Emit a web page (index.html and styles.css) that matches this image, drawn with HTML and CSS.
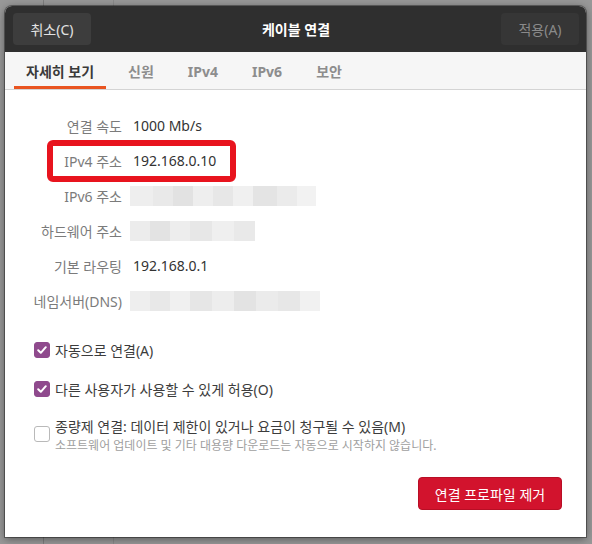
FILE: index.html
```html
<!DOCTYPE html>
<html lang="ko">
<head>
    <meta charset="UTF-8">
    <meta name="viewport" content="width=device-width, initial-scale=1.0">
    <title>케이블 연결</title>
    <link rel="stylesheet" href="styles.css">
</head>
<body>
    <div class="dialog">
        <div class="titlebar">
            <button class="title-button">취소(C)</button>
            <div class="title">케이블 연결</div>
            <button class="title-button apply" disabled>적용(A)</button>
        </div>

        <div class="tabs">
            <div class="tab active">자세히 보기</div>
            <div class="tab">신원</div>
            <div class="tab">IPv4</div>
            <div class="tab">IPv6</div>
            <div class="tab">보안</div>
        </div>

        <div class="content">
            <div class="details">
                <div class="row">
                    <span class="label">연결 속도</span>
                    <span class="value">1000 Mb/s</span>
                </div>
                <div class="row marked">
                    <span class="mark"></span>
                    <span class="label">IPv4 주소</span>
                    <span class="value">192.168.0.10</span>
                </div>
                <div class="row">
                    <span class="label">IPv6 주소</span>
                    <span class="blur blur-v6"></span>
                </div>
                <div class="row">
                    <span class="label">하드웨어 주소</span>
                    <span class="blur blur-hw"></span>
                </div>
                <div class="row">
                    <span class="label">기본 라우팅</span>
                    <span class="value">192.168.0.1</span>
                </div>
                <div class="row">
                    <span class="label">네임서버(DNS)</span>
                    <span class="blur blur-dns"></span>
                </div>
            </div>

            <div class="options">
                <label class="check">
                    <span class="box checked">
                        <svg width="12" height="12" viewBox="0 0 12 12"><path d="M2.2 6.3 L4.8 8.8 L9.8 3.2" fill="none" stroke="#fff" stroke-width="2" stroke-linecap="round" stroke-linejoin="round"/></svg>
                    </span>
                    <span>자동으로 연결(A)</span>
                </label>
                <label class="check">
                    <span class="box checked">
                        <svg width="12" height="12" viewBox="0 0 12 12"><path d="M2.2 6.3 L4.8 8.8 L9.8 3.2" fill="none" stroke="#fff" stroke-width="2" stroke-linecap="round" stroke-linejoin="round"/></svg>
                    </span>
                    <span>다른 사용자가 사용할 수 있게 허용(O)</span>
                </label>
                <label class="check metered">
                    <span class="box"></span>
                    <span class="check-text">
                        <span>종량제 연결: 데이터 제한이 있거나 요금이 청구될 수 있음(M)</span>
                        <span class="hint">소프트웨어 업데이트 및 기타 대용량 다운로드는 자동으로 시작하지 않습니다.</span>
                    </span>
                </label>
            </div>

            <div class="actions">
                <button class="danger">연결 프로파일 제거</button>
            </div>
        </div>
    </div>
</body>
</html>
```

FILE: styles.css
```css
body {
    margin: 0;
    width: 592px;
    height: 544px;
    overflow: hidden;
    background-color: #989898;
    background-image:
        linear-gradient(90deg, transparent 43px, #7e7e7e 43px, #7e7e7e 44px, transparent 44px),
        linear-gradient(90deg, transparent 113px, #8a8a8a 113px, #8a8a8a 114px, transparent 114px);
    font-family: 'Noto Sans', 'Noto Sans CJK KR', sans-serif;
    font-size: 14px;
    color: #3c3c3c;
}

.dialog {
    margin: 6px 0 0 5px;
    width: 581px;
    height: 531px;
    background: #fff;
    border-radius: 7px 7px 0 0;
    box-shadow: 0 0 0 1px rgba(0, 0, 0, 0.35), 0 2px 8px rgba(0, 0, 0, 0.45);
    display: flex;
    flex-direction: column;
    overflow: hidden;
}

.titlebar {
    height: 46px;
    background: #2f2f2f;
    display: grid;
    grid-template-columns: 1fr auto 1fr;
    align-items: center;
    padding: 0 7px 0 8px;
    box-sizing: border-box;
}

.title-button {
    width: 78px;
    height: 32px;
    border: none;
    border-radius: 4px;
    background: #3d3d3d;
    color: #e2e2e2;
    font-family: inherit;
    font-size: 14px;
    padding: 0;
}

.title-button.apply {
    justify-self: end;
    background: #363636;
    color: #8a8a8a;
}

.title {
    color: #fff;
    font-weight: bold;
    font-size: 14px;
}

.tabs {
    height: 38px;
    box-sizing: border-box;
    background: #f6f6f6;
    border-bottom: 1px solid #d4d4d4;
    display: flex;
    gap: 10px;
    padding-left: 9px;
}

.tab {
    padding: 4px 12px 0;
    display: flex;
    align-items: center;
    border-bottom: 3px solid transparent;
    color: #8d8d8d;
    font-weight: bold;
    font-size: 14px;
}

.tab.active {
    color: #3a3a3a;
    border-bottom-color: #e95420;
}

.content {
    flex: 1;
    display: flex;
    flex-direction: column;
    padding-top: 18px;
}

.row {
    height: 35px;
    display: flex;
    align-items: center;
    gap: 11px;
}

.label {
    width: 117px;
    text-align: right;
    color: #7b7b7b;
    white-space: nowrap;
}

.value {
    color: #333;
}

.marked {
    position: relative;
}

.mark {
    position: absolute;
    left: 42px;
    top: -3px;
    width: 189px;
    height: 42px;
    box-sizing: border-box;
    border: 6px solid #e8141e;
    border-radius: 6px;
}

.blur {
    height: 20px;
    margin-left: -3px;
}

.blur-v6 {
    width: 186px;
    background: linear-gradient(90deg,
        #eeeeee 0 23px, #e9e9e9 23px 43px, #e2e2e2 43px 63px, #eeeeee 63px 83px,
        #e7e7e7 83px 103px, #f0f0f0 103px 123px, #e4e4e4 123px 147px,
        #ebebeb 147px 167px, #f2f2f2 167px 186px);
}

.blur-hw {
    width: 125px;
    background: linear-gradient(90deg,
        #ececec 0 20px, #e3e3e3 20px 40px, #ededed 40px 60px, #e7e7e7 60px 82px,
        #efefef 82px 104px, #e9e9e9 104px 125px);
}

.blur-dns {
    width: 190px;
    background: linear-gradient(90deg,
        #eeeeee 0 20px, #e8e8e8 20px 40px, #f0f0f0 40px 60px, #e6e6e6 60px 82px,
        #ededed 82px 104px, #e3e3e3 104px 126px, #ebebeb 126px 148px,
        #e7e7e7 148px 170px, #f1f1f1 170px 190px);
}

.options {
    margin-top: 21px;
    padding-left: 29px;
    display: flex;
    flex-direction: column;
    gap: 17px;
}

.check {
    display: flex;
    align-items: center;
    gap: 5px;
    height: 22px;
    color: #3c3c3c;
}

.box {
    width: 16px;
    height: 16px;
    box-sizing: border-box;
    border-radius: 3px;
    border: 1px solid #b9b9b9;
    background: #fff;
    display: flex;
    align-items: center;
    justify-content: center;
    flex-shrink: 0;
}

.box.checked {
    background: #8f4a8d;
    border-color: #8f4a8d;
}

.check.metered {
    height: auto;
    align-items: flex-start;
}

.check.metered .box {
    margin-top: 9px;
}

.check-text {
    display: flex;
    flex-direction: column;
    line-height: 20px;
}

.hint {
    margin-top: 1px;
    font-size: 12px;
    line-height: 16px;
    color: #a0a0a0;
}

.actions {
    margin-top: 23px;
    display: flex;
    justify-content: flex-end;
    padding-right: 24px;
}

.danger {
    width: 144px;
    height: 33px;
    border: 1px solid #b80e25;
    border-radius: 4px;
    background: #d2132d;
    color: #fff;
    font-family: inherit;
    font-size: 14px;
    padding: 0;
}
```
